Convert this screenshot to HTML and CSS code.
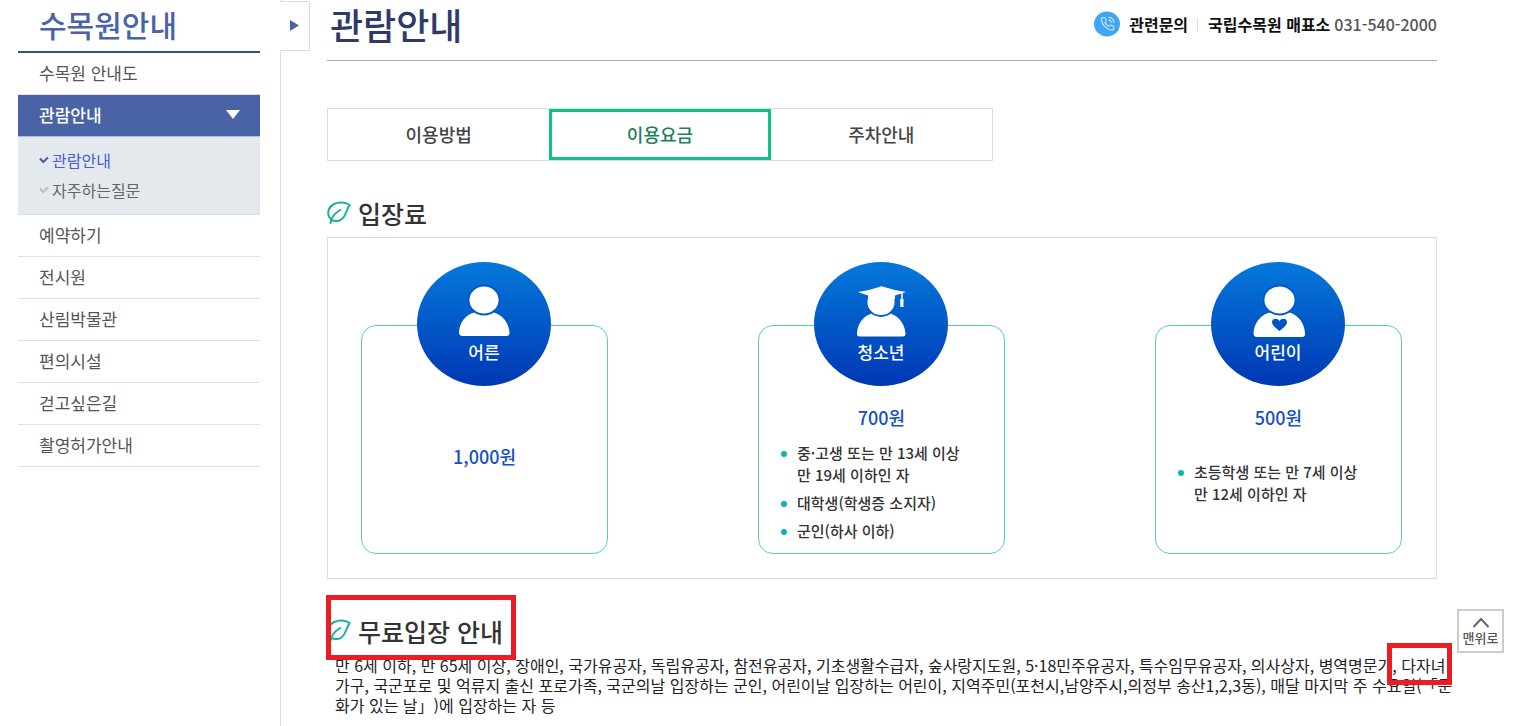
FILE: index.html
```html
<!DOCTYPE html>
<html lang="ko">
  <head>
    <meta charset="UTF-8" />
    <title>관람안내 - 국립수목원</title>
    <meta name="viewport" content="width=device-width, initial-scale=1.0" />
    <link rel="stylesheet" href="styles.css">
  </head>

  <body>
    <div class="page">
      <aside class="sidebar">
        <h2 class="side-title">수목원안내</h2>
        <ul class="side-menu">
          <li><a href="#">수목원 안내도</a></li>
          <li class="active">
            <a href="#">관람안내
              <svg class="arrow" width="14" height="9" viewBox="0 0 14 9"><path d="M0 0h14L7 9z" fill="#fff" /></svg>
            </a>
            <ul class="sub-menu">
              <li class="on">
                <a href="#"><svg width="10" height="8" viewBox="0 0 10 8"><path d="M1 2.5l3.2 3.5L9 1.5" /></svg>관람안내</a>
              </li>
              <li>
                <a href="#"><svg width="10" height="8" viewBox="0 0 10 8"><path d="M1 2.5l3.2 3.5L9 1.5" /></svg>자주하는질문</a>
              </li>
            </ul>
          </li>
          <li><a href="#">예약하기</a></li>
          <li><a href="#">전시원</a></li>
          <li><a href="#">산림박물관</a></li>
          <li><a href="#">편의시설</a></li>
          <li><a href="#">걷고싶은길</a></li>
          <li><a href="#">촬영허가안내</a></li>
        </ul>
      </aside>

      <div class="content">
        <button type="button" class="side-toggle" aria-label="메뉴 열기">
          <svg width="9" height="11" viewBox="0 0 9 11"><path d="M0 0l9 5.5L0 11z" fill="#4a62a6" /></svg>
        </button>

        <main>
          <header class="page-head">
            <h1>관람안내</h1>
            <p class="contact">
              <svg class="phone" width="26" height="26" viewBox="0 0 26 26">
                <ellipse cx="13" cy="13" rx="13" ry="12.5" fill="#3fa5f5" />
                <g transform="translate(6 5.5) scale(.62)" fill="none" stroke="#c4e3fc" stroke-width="2" stroke-linecap="round" stroke-linejoin="round">
                  <path d="M22 17v3a2 2 0 0 1-2.2 2A19.8 19.8 0 0 1 2 4.2A2 2 0 0 1 4 2h3a2 2 0 0 1 2 1.7c.1 1 .4 1.9.7 2.8a2 2 0 0 1-.5 2.100L8 9.9a16 16 0 0 0 6 6l1.3-1.2a2 2 0 0 1 2.100-.5c.9.3 1.8.6 2.800.7A2 2 0 0 1 22 17z" />
                  <path d="M14.5 1.5a9 9 0 0 1 8 8M14.5 5.5a5 5 0 0 1 4 4" />
                </g>
              </svg>
              <strong>관련문의</strong>
              <span class="bar"></span>
              <strong>국립수목원 매표소</strong>
              <span class="tel">031-540-2000</span>
            </p>
          </header>

          <nav class="tabs">
            <a href="#">이용방법</a>
            <a href="#" class="on">이용요금</a>
            <a href="#">주차안내</a>
          </nav>

          <section>
            <h2 class="section-title">
              <svg class="leaf" width="25" height="24" viewBox="0 0 25 24"><path d="M22.700 4.300C19 1 12 .8 7 3C2 5.500 0 11 2 15.500C4 19.500 8 20.800 12.500 19.500C19.500 17 18.500 8.500 22.700 4.300zM3.500 22C4 16.500 7 12.500 13.300 9" /></svg>
              입장료
            </h2>
            <div class="fees">
              <article class="fee">
                <h3 class="badge">
                  <svg width="134" height="76" viewBox="0 0 134 76">
                    <path d="M42 70C43 57 52 49 67 49s24 8 25.500 21q.5 4-3 4h-44q-3.500 0-3.500-4z" fill="#fff" />
                    <ellipse cx="67" cy="38" rx="15.500" ry="14.500" fill="#fff" stroke="#0059cd" stroke-width="1.800" />
                  </svg>
                  어른
                </h3>
                <p class="price center">1,000원</p>
              </article>

              <article class="fee">
                <h3 class="badge">
                  <svg width="134" height="76" viewBox="0 0 134 76">
                    <path d="M43 71C44 58 53 50 67 50s23 8 24.500 21q.5 3.500-3 3.500h-42.500q-3.500 0-3-3.500z" fill="#fff" />
                    <ellipse cx="67" cy="40" rx="14.500" ry="14" fill="#fff" stroke="#005cd0" stroke-width="1.800" />
                    <path d="M44 30Q57 28 67.500 24.200Q79 28 92 30L81 33.500v4H54v-4z" fill="#fff" />
                    <path d="M88 30v8" stroke="#fff" stroke-width="1.500" />
                    <path d="M86.300 37h3.200v8h-3.200z" fill="#fff" />
                  </svg>
                  청소년
                </h3>
                <p class="price">700원</p>
                <ul class="terms">
                  <li>중·고생 또는 만 13세 이상<br />만 19세 이하인 자</li>
                  <li>대학생(학생증 소지자)</li>
                  <li>군인(하사 이하)</li>
                </ul>
              </article>

              <article class="fee">
                <h3 class="badge">
                  <svg width="134" height="76" viewBox="0 0 134 76">
                    <path d="M42.500 71C43.500 58 53 49 68.500 49s24.500 9 25.500 22q.5 4-3 4h-45q-3.500 0-3.500-4z" fill="#fff" />
                    <ellipse cx="68.500" cy="38" rx="16" ry="14.500" fill="#fff" stroke="#0059cd" stroke-width="1.800" />
                    <path d="M68.500 69C65 66 61 63.500 61 60c0-4 5.500-4.500 7.500-1c2-3.500 7.500-3 7.500 1c0 3.500-4 6-7.500 9z" fill="#0052c8" />
                  </svg>
                  어린이
                </h3>
                <p class="price">500원</p>
                <ul class="terms center">
                  <li>초등학생 또는 만 7세 이상<br />만 12세 이하인 자</li>
                </ul>
              </article>
            </div>
          </section>

          <section>
            <h2 class="section-title marked">
              <svg class="leaf" width="25" height="24" viewBox="0 0 25 24"><path d="M22.700 4.300C19 1 12 .8 7 3C2 5.500 0 11 2 15.500C4 19.500 8 20.800 12.500 19.500C19.500 17 18.500 8.500 22.700 4.300zM3.500 22C4 16.500 7 12.500 13.300 9" /></svg>
              무료입장 안내
            </h2>
            <p class="free-text">
              만 6세 이하, 만 65세 이상, 장애인, 국가유공자, 독립유공자, 참전유공자, 기초생활수급자, 숲사랑지도원, 5·18민주유공자, 특수임무유공자, 의사상자, 병역명문가, <span class="marked">다자녀</span><br />
              가구, 국군포로 및 억류지 출신 포로가족, 국군의날 입장하는 군인, 어린이날 입장하는 어린이, 지역주민(포천시,남양주시,의정부 송산1,2,3동), 매달 마지막 주 수요일(「문<br />
              화가 있는 날」)에 입장하는 자 등
            </p>
          </section>
        </main>
      </div>
    </div>

    <a href="#" class="to-top">
      <svg width="18" height="11" viewBox="0 0 18 11"><path d="M1.500 10L9 2l7.500 8" /></svg>
      맨위로
    </a>
  </body>
</html>
```
FILE: styles.css
```css
*,
*::before,
*::after {
  box-sizing: border-box;
}

body {
  margin: 0;
  background: #fff;
  color: #333;
  font-family: "Noto Sans CJK KR", "Noto Sans", sans-serif;
  font-size: 16px;
}

h1,
h2,
h3,
p,
ul {
  margin: 0;
  padding: 0;
}

h1,
h2,
h3 {
  font-weight: 500;
}

ul {
  list-style: none;
}

a {
  color: inherit;
  text-decoration: none;
}

.page {
  display: flex;
  min-height: 100vh;
}

/* sidebar */
.sidebar {
  flex: none;
  width: 280px;
  padding: 0 20px 0 18px;
}

.side-title {
  padding: 0 0 2px 21px;
  border-bottom: 2px solid #355672;
  color: #4a62a6;
  font-size: 30px;
  line-height: 49px;
}

.side-menu > li > a {
  display: flex;
  align-items: center;
  justify-content: space-between;
  height: 42px;
  padding: 0 20px 2px 21px;
  border-bottom: 1px solid #e0e0e0;
  color: #555;
  font-size: 17px;
}

.side-menu > .active > a {
  background: #4a62a6;
  border-color: #b4bed8;
  color: #fff;
  font-weight: 500;
}

.sub-menu {
  padding: 8px 21px 9px;
  background: #e4e9ed;
  border-bottom: 1px solid #d9dddf;
  color: #666;
  line-height: 30px;
}

.sub-menu a {
  display: flex;
  align-items: center;
  gap: 3px;
}

.sub-menu svg {
  fill: none;
  stroke: #b9bfc8;
  stroke-width: 2;
}

.sub-menu .on {
  color: #4d5bd6;
}

.sub-menu .on svg {
  stroke: #4a62a6;
}

/* content */
.content {
  position: relative;
  flex: 1;
  min-width: 0;
  padding: 0 77px 11px 46px;
  border-left: 1px solid #ddd;
}

.side-toggle {
  position: absolute;
  top: 1px;
  left: -1px;
  width: 30px;
  height: 50px;
  padding: 0;
  background: #fff;
  border: 1px solid #ddd;
  border-left: 0;
  cursor: pointer;
}

.page-head {
  display: flex;
  justify-content: space-between;
  padding-bottom: 12px;
  border-bottom: 1px solid #aaa;
  line-height: 48px;
}

.page-head h1 {
  padding-left: 3px;
  color: #2f3a6b;
  font-size: 36px;
}

.contact {
  display: flex;
  align-items: center;
  color: #111;
}

.contact strong {
  font-weight: 700;
}

.phone {
  margin-right: 9px;
}

.bar {
  width: 1px;
  height: 13px;
  margin: 0 10px 0 9px;
  background: #ddd;
}

.tel {
  margin-left: 4px;
  color: #555;
  font-weight: 500;
}

.tabs {
  display: grid;
  grid-template-columns: repeat(3, 1fr);
  width: 60%;
  margin-top: 47px;
  border: 1px solid #ddd;
}

.tabs a {
  color: #444;
  font-size: 18px;
  font-weight: 500;
  line-height: 51px;
  text-align: center;
}

.tabs .on {
  border: 3px solid #0fc088;
  color: #1c7f5d;
  line-height: 45px;
}

.section-title {
  display: flex;
  align-items: center;
  gap: 6px;
  margin-top: 30px;
  padding-bottom: 2px;
  font-size: 25px;
  line-height: 44px;
}

.leaf {
  fill: none;
  stroke: #1aaea0;
  stroke-width: 2;
  stroke-linecap: round;
  stroke-linejoin: round;
}

/* fee cards */
.fees {
  display: flex;
  justify-content: space-between;
  padding: 87px 34px 24px 33px;
  border: 1px solid #ddd;
}

.fee {
  position: relative;
  width: 247px;
  min-height: 229px;
  padding: 78px 0 10px;
  border: 1px solid #4fcfcc;
  border-radius: 15px;
}

.badge {
  position: absolute;
  top: -64px;
  left: 55px;
  display: flex;
  flex-direction: column;
  align-items: center;
  gap: 4px;
  width: 134px;
  height: 124px;
  border-radius: 50%;
  background: linear-gradient(#0579db, #0037b4);
  color: #fff;
  font-size: 17px;
  line-height: 20px;
}

.price {
  color: #174fc4;
  font-size: 18px;
  font-weight: 500;
  line-height: 26px;
  text-align: center;
}

.price.center {
  margin-top: 39px;
}

.terms {
  display: grid;
  gap: 6px;
  margin-top: 12px;
  padding-left: 38px;
  font-size: 15px;
  font-weight: 500;
  line-height: 22px;
}

.terms.center {
  margin-top: 31px;
}

.terms li {
  position: relative;
}

.terms li::before {
  content: "";
  position: absolute;
  top: 9px;
  left: -16px;
  width: 6px;
  height: 6px;
  border-radius: 50%;
  background: #09b3b8;
}

/* free admission */
.free-text {
  margin-right: -20px;
  padding-left: 8px;
  color: #222;
  line-height: 20px;
  text-spacing-trim: space-all;
}

.marked {
  position: relative;
}

.marked::after {
  content: "";
  position: absolute;
  border: 5px solid #ed1c24;
}

h2.marked::after {
  top: -14px;
  left: -1px;
  width: 190px;
  height: 65px;
}

span.marked::after {
  inset: -10px -7px -8px -14px;
}

.to-top {
  position: fixed;
  right: 10px;
  bottom: 73px;
  display: flex;
  flex-direction: column;
  align-items: center;
  gap: 2px;
  width: 47px;
  height: 44px;
  padding-top: 6px;
  background: #fff;
  border: 2px solid #ccc;
  color: #555;
  font-size: 13px;
  font-weight: 500;
  line-height: 16px;
}

.to-top svg {
  fill: none;
  stroke: #666;
  stroke-width: 2;
}
```
